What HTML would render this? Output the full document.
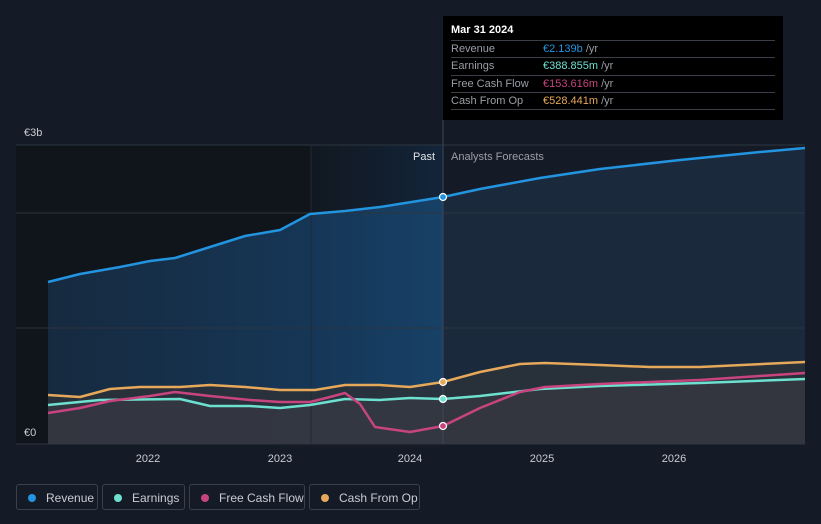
<!DOCTYPE html><html><head><style>
body{margin:0;background:#151b26;font-family:"Liberation Sans",sans-serif;}
.tt{position:absolute;left:443px;top:16px;width:340px;height:104px;background:#000;}
.tt .h{color:#fff;font-size:11px;font-weight:bold;position:absolute;left:8px;top:8px}
.row{position:absolute;left:8px;width:324px;height:17px;border-top:1px solid #3a3e45;font-size:11px;color:#9a9ea5;line-height:17px}
.row b{font-weight:normal;position:absolute;left:92px}
.leg{position:absolute;top:484px;height:26px;border:1px solid #3b414b;border-radius:3px;color:#c8ccd2;font-size:12px;line-height:26px;box-sizing:border-box}
.leg i{display:inline-block;width:8px;height:8px;border-radius:50%;margin:0 10px 0 11px;vertical-align:0}
</style></head><body>
<svg width="821" height="524" style="position:absolute;left:0;top:0">
<defs>
<linearGradient id="hl" x1="0" y1="0" x2="1" y2="0"><stop offset="0" stop-color="#111820"/><stop offset="1" stop-color="#13243a"/></linearGradient>
<linearGradient id="rv" x1="0" y1="0" x2="1" y2="0"><stop offset="0" stop-color="#162a3f"/><stop offset="0.66" stop-color="#163656"/><stop offset="1" stop-color="#174166"/></linearGradient>
</defs>
<rect x="16" y="145" width="295" height="299" fill="#10141b"/>
<rect x="311" y="145" width="132" height="299" fill="url(#hl)"/>
<path d="M48,282 L80,274 120,267 150,261 175,258 210,247 245,236 280,230 310,214 345,211 380,207 443,197 L443,444 48,444Z" fill="url(#rv)"/>
<path d="M443,197 L480,189 540,178 600,169 680,160 760,152 805,148 L805,444 443,444Z" fill="#1a2a3c"/>
<path d="M48,395 L80,397 110,389 140,387 180,387 210,385 245,387 280,390 315,390 345,385 380,385 410,387 443,382 480,372 520,364 545,363 600,365 650,367 700,367 805,362 L805,444 48,444Z" fill="#2c3138" opacity="0.85"/>
<path d="M48,405 L100,400 180,399 210,406 250,406 280,408 310,405 345,399 380,400 410,398 443,399 480,396 540,389 600,386 700,383 805,379 L805,444 48,444Z" fill="#3a3a44" opacity="0.6"/>
<g stroke="#2c3440" stroke-width="1"><line x1="16" y1="145" x2="805" y2="145"/><line x1="16" y1="213" x2="805" y2="213"/><line x1="16" y1="328" x2="805" y2="328"/><line x1="16" y1="444" x2="805" y2="444"/></g>
<line x1="311" y1="145" x2="311" y2="444" stroke="#1e2a38"/>
<line x1="443" y1="120" x2="443" y2="444" stroke="#3c4858"/>
<g fill="none" stroke-width="2.5" stroke-linejoin="round">
<path d="M48,282 L80,274 120,267 150,261 175,258 210,247 245,236 280,230 310,214 345,211 380,207 443,197 480,189 540,178 600,169 680,160 760,152 805,148" stroke="#2394e0"/>
<path d="M48,395 L80,397 110,389 140,387 180,387 210,385 245,387 280,390 315,390 345,385 380,385 410,387 443,382 480,372 520,364 545,363 600,365 650,367 700,367 805,362" stroke="#e6a85a"/>
<path d="M48,405 L100,400 180,399 210,406 250,406 280,408 310,405 345,399 380,400 410,398 443,399 480,396 540,389 600,386 700,383 805,379" stroke="#6de0cf"/>
<path d="M48,413 L80,408 110,401 150,396 175,392 210,396 250,400 280,402 310,402 330,397 345,393 360,404 375,427 410,432 443,426 480,408 520,392 545,387 600,384 700,380 805,373" stroke="#c8447f"/>
</g>
<g stroke="#fff" stroke-width="1.2"><circle cx="443" cy="197" r="3.5" fill="#2394e0"/><circle cx="443" cy="382" r="3.5" fill="#e6a85a"/><circle cx="443" cy="399" r="3.5" fill="#6de0cf"/><circle cx="443" cy="426" r="3.5" fill="#c8447f"/></g>
<g font-size="11" fill="#c8ccd2" font-family="Liberation Sans"><text x="24" y="136">€3b</text><text x="24" y="436">€0</text>
<text x="435" y="160" text-anchor="end" fill="#e0e3e8">Past</text><text x="451" y="160" fill="#9a9ea5">Analysts Forecasts</text>
<text x="148" y="462" text-anchor="middle">2022</text><text x="280" y="462" text-anchor="middle">2023</text><text x="410" y="462" text-anchor="middle">2024</text><text x="542" y="462" text-anchor="middle">2025</text><text x="674" y="462" text-anchor="middle">2026</text></g>
</svg>
<div class="tt"><div class="h">Mar 31 2024</div>
<div class="row" style="top:24px">Revenue<b><span style="color:#2394e0">€2.139b</span> /yr</b></div>
<div class="row" style="top:41px">Earnings<b><span style="color:#6de0cf">€388.855m</span> /yr</b></div>
<div class="row" style="top:59px">Free Cash Flow<b><span style="color:#c8447f">€153.616m</span> /yr</b></div>
<div class="row" style="top:76px">Cash From Op<b><span style="color:#e6a85a">€528.441m</span> /yr</b></div>
<div class="row" style="top:93px;height:0"></div></div>
<div class="leg" style="left:16px;width:82px"><i style="background:#2394e0"></i>Revenue</div>
<div class="leg" style="left:102px;width:83px"><i style="background:#6de0cf"></i>Earnings</div>
<div class="leg" style="left:189px;width:116px"><i style="background:#c8447f"></i>Free Cash Flow</div>
<div class="leg" style="left:309px;width:111px"><i style="background:#e6a85a"></i>Cash From Op</div>
</body></html>
